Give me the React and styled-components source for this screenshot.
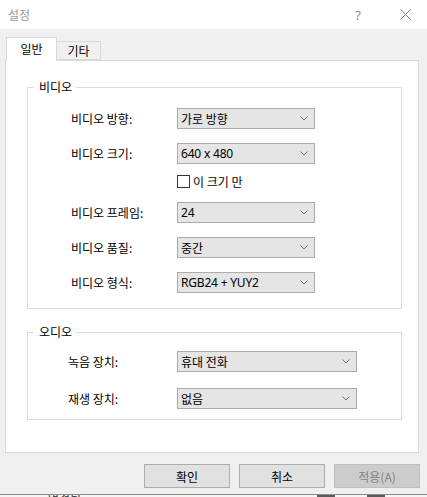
import React from "react";
import styled, { createGlobalStyle } from "styled-components";

const Global = createGlobalStyle`
  html, body { margin: 0; padding: 0; background: #f0f0f0; }
  body { font-family: "Noto Sans CJK KR", "Noto Sans", sans-serif; font-size: 12px; color: #000; }
  * { box-sizing: border-box; }
`;

const Window = styled.div`
  width: 427px;
  height: 497px;
  overflow: hidden;
  display: flex;
  flex-direction: column;
  background: #f0f0f0;
`;

const TitleBar = styled.div`
  height: 29px;
  flex: none;
  background: #fff;
  display: flex;
  align-items: center;
  padding-left: 8px;
  padding-right: 11px;
`;

const Title = styled.div`
  flex: 1;
  color: #9a9a9a;
  font-size: 12px;
  line-height: 16px;
`;

const TitleBtn = styled.div`
  width: ${(p) => p.$w}px;
  margin-right: ${(p) => p.$mr || 0}px;
  height: 29px;
  display: flex;
  align-items: center;
  justify-content: center;
  color: #8a8a8a;
  font-family: "Noto Sans", sans-serif;
  font-size: 13px;
`;

const Body = styled.div`
  flex: 1;
  display: flex;
  flex-direction: column;
  padding: 8px 7px 0 5px;
`;

const TabStrip = styled.div`
  display: flex;
  align-items: flex-end;
  padding-left: 1px;
  height: 23px;
  position: relative;
  z-index: 1;
`;

const Tab = styled.div`
  height: ${(p) => (p.$active ? 24 : 19)}px;
  width: ${(p) => p.$w}px;
  margin-bottom: ${(p) => (p.$active ? -1 : 0)}px;
  background: ${(p) => (p.$active ? "#fff" : "#f0f0f0")};
  border: 1px solid #d9d9d9;
  border-bottom: ${(p) => (p.$active ? "none" : "1px solid #d9d9d9")};
  ${(p) => (!p.$active ? "border-left: none;" : "")}
  display: flex;
  align-items: ${(p) => (p.$active ? "flex-start" : "center")};
  justify-content: center;
  padding-top: ${(p) => (p.$active ? 3 : 0)}px;
  font-size: 12px;
  line-height: 16px;
`;

const Panel = styled.div`
  width: 414px;
  height: 393px;
  background: #fff;
  border: 1px solid #d9d9d9;
  padding: 26px 16px 0 21px;
  display: flex;
  flex-direction: column;
  gap: 23px;
`;

const Group = styled.section`
  border: 1px solid #dcdcdc;
  display: flex;
  flex-direction: column;
`;

const Legend = styled.div`
  align-self: flex-start;
  margin: -9px 0 0 6px;
  padding: 0 4px 0 5px;
  background: #fff;
  line-height: 16px;
  font-size: 12px;
`;

const GroupBody = styled.div`
  padding: ${(p) => p.$pad};
  display: flex;
  flex-direction: column;
  gap: ${(p) => p.$gap}px;
`;

const Row = styled.div`
  display: flex;
  align-items: flex-start;
`;

const Label = styled.div`
  width: ${(p) => p.$w}px;
  flex: none;
  height: 21px;
  line-height: 21px;
  font-size: 12px;
`;

const Control = styled.div`
  display: flex;
  flex-direction: column;
  gap: 10px;
`;

const Select = styled.div`
  width: ${(p) => p.$w}px;
  height: 21px;
  background: #e5e5e5;
  border: 1px solid #acacac;
  display: flex;
  align-items: center;
  justify-content: space-between;
  padding: 0 6px 0 3px;
  font-size: 12px;
  line-height: 16px;
`;

const Latin = styled.span`
  font-family: "Noto Sans", "Noto Sans CJK KR", sans-serif;
  font-size: 12px;
  letter-spacing: -0.2px;
`;

const CheckRow = styled.label`
  display: flex;
  align-items: center;
  height: 14px;
  gap: 3px;
  font-size: 12px;
`;

const Box = styled.span`
  width: 13px;
  height: 13px;
  border: 1px solid #333;
  background: #fff;
  display: inline-block;
`;

const Footer = styled.div`
  display: flex;
  justify-content: flex-end;
  gap: 9px;
  padding-top: 11px;
`;

const Button = styled.div`
  width: 86px;
  height: 24px;
  border: 1px solid ${(p) => (p.$disabled ? "#bfbfbf" : "#adadad")};
  background: ${(p) => (p.$disabled ? "#cccccc" : "#e1e1e1")};
  color: ${(p) => (p.$disabled ? "#838383" : "#000")};
  display: flex;
  align-items: center;
  justify-content: center;
  font-size: 12px;
`;

const Behind = styled.div`
  height: 3px;
  flex: none;
  border-top: 1px solid #8c8c8c;
  background: #f7f7f7;
  margin-top: 3px;
  display: flex;
  align-items: flex-start;
  overflow: hidden;
`;

const BehindText = styled.div`
  margin-left: 48px;
  font-size: 12px;
  line-height: 16px;
  margin-top: -5px;
  color: #333;
`;

const BehindBlock = styled.div`
  width: 18px;
  height: 3px;
  background: #5a5a5a;
  margin-left: ${(p) => p.$ml}px;
`;

const Chevron = () => (
  <svg width="8" height="5" viewBox="0 0 8 5">
    <polyline points="0.5,0.5 4,4 7.5,0.5" fill="none" stroke="#707070" strokeWidth="1" />
  </svg>
);

const Close = () => (
  <svg width="11" height="11" viewBox="0 0 11 11">
    <path d="M0.5 0.5 L10.5 10.5 M10.5 0.5 L0.5 10.5" stroke="#7a7a7a" strokeWidth="1" />
  </svg>
);

function Field({ label, value, w, lw, latin, children }) {
  return (
    <Row>
      <Label $w={lw}>{label}</Label>
      <Control>
        <Select $w={w}>
          {latin ? <Latin>{value}</Latin> : <span>{value}</span>}
          <Chevron />
        </Select>
        {children}
      </Control>
    </Row>
  );
}

export default function App() {
  return (
    <>
      <Global />
      <Window>
        <TitleBar>
          <Title>설정</Title>
          <TitleBtn $w={26} $mr={23}>?</TitleBtn>
          <TitleBtn $w={22}>
            <Close />
          </TitleBtn>
        </TitleBar>
        <Body>
          <TabStrip>
            <Tab $active $w={51}>일반</Tab>
            <Tab $w={44}>기타</Tab>
          </TabStrip>
          <Panel>
            <Group>
              <Legend>비디오</Legend>
              <GroupBody $pad="13px 0 15px 43px" $gap={14}>
                <Field label="비디오 방향:" value="가로 방향" w={138} lw={106} />
                <Field label="비디오 크기:" value="640 x 480" w={138} lw={106} latin>
                  <CheckRow>
                    <Box />
                    <span>이 크기 만</span>
                  </CheckRow>
                </Field>
                <Field label="비디오 프레임:" value="24" w={138} lw={106} latin />
                <Field label="비디오 품질:" value="중간" w={138} lw={106} />
                <Field label="비디오 형식:" value="RGB24 + YUY2" w={138} lw={106} latin />
              </GroupBody>
            </Group>
            <Group>
              <Legend>오디오</Legend>
              <GroupBody $pad="11px 0 10px 40px" $gap={16}>
                <Field label="녹음 장치:" value="휴대 전화" w={180} lw={109} />
                <Field label="재생 장치:" value="없음" w={180} lw={109} />
              </GroupBody>
            </Group>
          </Panel>
          <Footer>
            <Button>확인</Button>
            <Button>취소</Button>
            <Button $disabled>적용(A)</Button>
          </Footer>
        </Body>
        <Behind>
          <BehindText>연결된</BehindText>
          <BehindBlock $ml={236} />
          <BehindBlock $ml={32} />
        </Behind>
      </Window>
    </>
  );
}
